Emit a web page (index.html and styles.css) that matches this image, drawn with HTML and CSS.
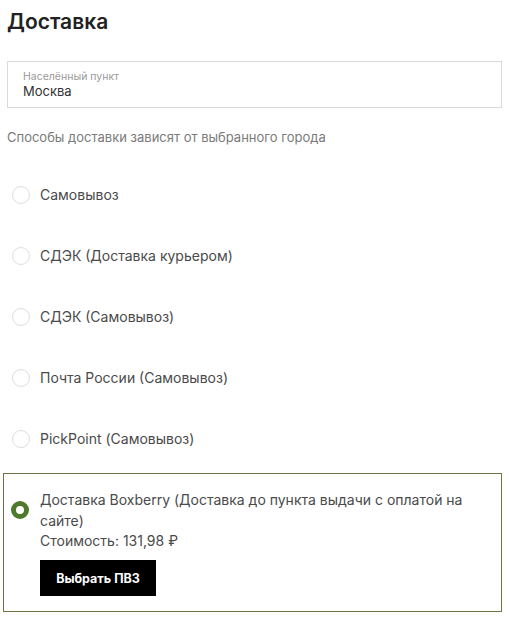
FILE: index.html
```html
<!DOCTYPE html>
<html lang="ru">
<head>
  <meta charset="UTF-8">
  <meta name="viewport" content="width=device-width, initial-scale=1.0">
  <title>Доставка</title>
  <link rel="stylesheet" href="styles.css">
</head>
<body>
  <div class="delivery">
    <h1 class="delivery-title">Доставка</h1>

    <div class="city-field">
      <div class="city-label">Населённый пункт</div>
      <div class="city-value">Москва</div>
    </div>

    <p class="delivery-hint">Способы доставки зависят от выбранного города</p>

    <div class="methods">
      <label class="method">
        <span class="radio"></span>
        <span class="method-name">Самовывоз</span>
      </label>
      <label class="method">
        <span class="radio"></span>
        <span class="method-name">СДЭК (Доставка курьером)</span>
      </label>
      <label class="method">
        <span class="radio"></span>
        <span class="method-name">СДЭК (Самовывоз)</span>
      </label>
      <label class="method">
        <span class="radio"></span>
        <span class="method-name">Почта России (Самовывоз)</span>
      </label>
      <label class="method">
        <span class="radio"></span>
        <span class="method-name">PickPoint (Самовывоз)</span>
      </label>

      <div class="method-active">
        <div class="method-head">
          <span class="radio radio-checked"></span>
          <span class="method-name">Доставка Boxberry (Доставка до пункта выдачи с оплатой на сайте)</span>
        </div>
        <div class="method-body">
          <div class="method-price">Стоимость: 131,98 ₽</div>
          <button class="pickup-btn">Выбрать ПВЗ</button>
        </div>
      </div>
    </div>
  </div>
</body>
</html>
```

FILE: styles.css
```css
* {
  margin: 0;
  padding: 0;
  box-sizing: border-box;
}

body {
  background: #fff;
  font-family: Inter, Roboto, "Liberation Sans", Arial, sans-serif;
  color: #444;
}

.delivery {
  padding: 7px 7px 0 7px;
}

.delivery-title {
  font-size: 21px;
  line-height: 30px;
  font-weight: 600;
  color: #222;
}

.city-field {
  margin-top: 24px;
  height: 47px;
  border: 1px solid #d9d9d9;
  padding: 8px 15px 0 15px;
}

.city-label {
  font-size: 10.5px;
  line-height: 13px;
  color: #9a9a9a;
}

.city-value {
  font-size: 13px;
  line-height: 17px;
  color: #333;
}

.delivery-hint {
  margin-top: 20px;
  font-size: 13px;
  line-height: 18px;
  color: #7a7a7a;
}

.methods {
  margin-top: 18px;
}

.method {
  display: flex;
  align-items: center;
  height: 61px;
  font-size: 14px;
  line-height: 21px;
  color: #4a4a4a;
}

.radio {
  flex: none;
  width: 18px;
  height: 18px;
  margin: 0 10px 0 5px;
  border: 1px solid #dedede;
  border-radius: 50%;
  background: #fff;
}

.method-active {
  margin: 4px 0 0 -4px;
  padding: 15px 10px 15px 0;
  border: 1px solid #6b7547;
  font-size: 14px;
  line-height: 21px;
  color: #4a4a4a;
}

.method-head {
  display: flex;
  align-items: center;
}

.radio-checked {
  margin-left: 7px;
  margin-right: 11px;
  border: 5px solid #4e7a2c;
}

.method-body {
  padding-left: 36px;
}

.method-price {
  line-height: 20px;
}

.pickup-btn {
  margin-top: 9px;
  width: 116px;
  height: 36px;
  border: none;
  background: #000;
  color: #fff;
  font-family: Inter, Roboto, "Liberation Sans", Arial, sans-serif;
  font-size: 12.5px;
  font-weight: 700;
  cursor: pointer;
}
```
